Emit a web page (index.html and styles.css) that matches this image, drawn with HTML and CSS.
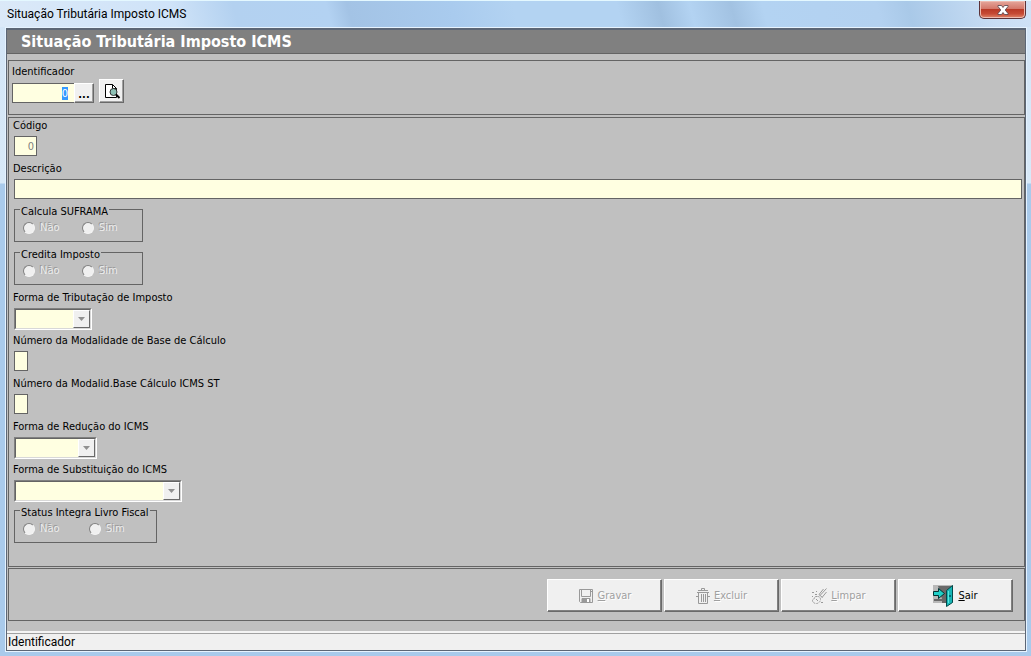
FILE: index.html
```
<!DOCTYPE html>
<html lang="pt-BR">
<head>
	<meta charset="utf-8">
	<title>Situação Tributária Imposto ICMS</title>
	<link rel="stylesheet" href="styles.css">
</head>
<body>
<div class="window">
	<div class="titlebar">
		<span class="caption">Situação Tributária Imposto ICMS</span>
		<button class="close" aria-label="Fechar">
			<svg width="12" height="10" viewBox="0 0 12 10"><path d="M1 .5h3.500L6 2.500 7.500.5H11v1L8.200 5 11 8.500v1H7.500L6 7.500 4.500 9.500H1v-1L3.800 5 1 1.500z" fill="#fff" stroke="#50404a" stroke-width=".8"/></svg>
		</button>
	</div>

	<div class="client">
		<h1>Situação Tributária Imposto ICMS</h1>

		<div class="panel key">
			<label for="identificador">Identificador</label>
			<div class="key-row">
				<div class="lookup">
					<input id="identificador" type="text" value="0">
					<button class="dots" aria-label="Procurar">...</button>
				</div>
				<button class="preview" aria-label="Visualizar">
					<svg width="18" height="18" viewBox="0 0 18 18">
						<path d="M2.500 2.500h7l4 4v9h-11z" fill="#fff" stroke="#000"/>
						<path d="M9.500 2.500v4h4" fill="none" stroke="#000"/>
						<circle cx="10.500" cy="10" r="3.500" fill="#8cc0b4" stroke="#333"/>
						<path d="M13 12.500l3.500 3.500" stroke="#000" stroke-width="2"/>
					</svg>
				</button>
			</div>
		</div>

		<div class="panel fields">
			<div class="field">
				<label for="codigo">Código</label>
				<input id="codigo" class="code" type="text" value="0" disabled>
			</div>
			<div class="field">
				<label for="descricao">Descrição</label>
				<input id="descricao" class="wide" type="text">
			</div>
			<fieldset>
				<legend>Calcula SUFRAMA</legend>
				<label><input type="radio" name="suframa" disabled>Não</label>
				<label><input type="radio" name="suframa" disabled>Sim</label>
			</fieldset>
			<fieldset>
				<legend>Credita Imposto</legend>
				<label><input type="radio" name="credita" disabled>Não</label>
				<label><input type="radio" name="credita" disabled>Sim</label>
			</fieldset>
			<div class="field">
				<label for="tributacao">Forma de Tributação de Imposto</label>
				<div class="combo combo-s">
					<select id="tributacao" disabled></select>
					<span class="arrow"><svg width="7" height="4" viewBox="0 0 7 4"><path d="M0 0h7L3.500 4z"/></svg></span>
				</div>
			</div>
			<div class="field">
				<label for="modbase">Número da Modalidade de Base de Cálculo</label>
				<input id="modbase" class="tiny" type="text">
			</div>
			<div class="field">
				<label for="modst">Número da Modalid.Base Cálculo ICMS ST</label>
				<input id="modst" class="tiny" type="text">
			</div>
			<div class="field">
				<label for="reducao">Forma de Redução do ICMS</label>
				<div class="combo combo-m">
					<select id="reducao" disabled></select>
					<span class="arrow"><svg width="7" height="4" viewBox="0 0 7 4"><path d="M0 0h7L3.500 4z"/></svg></span>
				</div>
			</div>
			<div class="field">
				<label for="substituicao">Forma de Substituição do ICMS</label>
				<div class="combo combo-l">
					<select id="substituicao" disabled></select>
					<span class="arrow"><svg width="7" height="4" viewBox="0 0 7 4"><path d="M0 0h7L3.500 4z"/></svg></span>
				</div>
			</div>
			<fieldset class="status-group">
				<legend>Status Integra Livro Fiscal</legend>
				<label><input type="radio" name="livro" disabled>Não</label>
				<label><input type="radio" name="livro" disabled>Sim</label>
			</fieldset>
		</div>

		<div class="panel actions">
			<button disabled>
				<svg width="16" height="16" viewBox="0 0 16 16" fill="none" stroke="#999">
					<path d="M1.500 1.500h13v13h-12l-1-1zM3.500 1.500v7h9v-7M12.500 3.500h2"/>
					<path d="M4 10.500h8v4H4z" fill="#999"/><path d="M10 11v3" stroke="#fff" stroke-width="2"/>
				</svg>
				<span><u>G</u>ravar</span>
			</button>
			<button disabled>
				<svg width="14" height="16" viewBox="0 0 14 16" fill="none" stroke="#999">
					<path d="M5.500 2V.5h3V2M2 2.500h10M1 4.500h12M0 8.500h2M12 8.500h2M2.500 5v10.500h9V5M5.500 6v8M7.500 6v8M9.500 6v8"/>
				</svg>
				<span><u>E</u>xcluir</span>
			</button>
			<button disabled>
				<svg width="16" height="16" viewBox="0 0 16 16" fill="none" stroke="#999">
					<path d="M15.500.5L9 7.500M15.500 4L11 9.500M12.500 1L8 6.500"/>
					<path d="M8 6.500l3.500 3"/>
					<path d="M6.500 8.500c2 0 3 1 3 3s-2 4-4 4-4-1-4-3 2-1 2-2.500 1-1.500 3-1.500z" stroke-dasharray="2 1"/>
					<path d="M1 4.500h2M4 6.500h2M1 8.500h1M5 3.500h1M10 14.500h2M5 11l2 2"/>
				</svg>
				<span><u>L</u>impar</span>
			</button>
			<button>
				<svg width="21" height="22" viewBox="0 0 21 22">
					<path d="M0 0h20v18H0z" fill="#b8b8b8"/>
					<path d="M5 1h13v17H9v-2H1v-2h8z" fill="#686868"/>
					<path d="M.5 6.500h5v-3l6 5-6 5v-3h-5z" fill="#20d0c8" stroke="#033"/>
					<path d="M13.500 5.500l6-5v17l-6 4z" fill="#16b5b5" stroke="#034848"/>
					<path d="M15.500 6v12" stroke="#55e8e0"/><path d="M17 10v2" stroke="#023"/>
				</svg>
				<span><u>S</u>air</span>
			</button>
		</div>

		<div class="statusbar">Identificador</div>
	</div>
</div>
<script>
	// start with the key field selected
	document.getElementById("identificador").select();
</script>
</body>
</html>
```
FILE: styles.css
```
* { box-sizing: border-box; }
body { margin: 0; font: 11px/14px "DejaVu Sans Condensed", "DejaVu Sans", sans-serif; color: #000; }
input, select, button { font: inherit; margin: 0; border-radius: 0; }
button { padding: 0; background: #f0f0f0; color: #000; }

.window {
	display: flex;
	flex-direction: column;
	min-height: 100vh;
	padding: 0 4px 4px 5px;
	border-top: 1px solid #e4f8ff;
	background: linear-gradient(#d3e5f7 0, #d8e9f8 182px, #a9caeb 183px, #a9caeb 100%);
}

/* title bar */
.titlebar {
	display: flex;
	justify-content: space-between;
	align-items: flex-start;
	height: 26px;
	margin: 0 -4px 0 -5px;
	padding: 0 5px 0 7px;
	background: linear-gradient(75deg, #dbe9f8 0, #cfe3f8 17%, #b3d1f0 23%, #b3d2f2 32%, #a3c3e5 34%, #a9cbee 44%, #b3d3f2 50%, #b3d3f2 60%, #a0c0e0 64%, #b3d3f2 67%, #a2c2e2 71%, #b3d3f2 74%, #b3d1f0 85%, #a9c9e8 88%, #c8ddf4 96%, #d0e2f6 100%);
}
.caption { font: 12px/26px Roboto, sans-serif; }
.close {
	width: 47px;
	height: 18px;
	border: 1px solid #5c3238;
	border-top: 0;
	border-radius: 0 0 5px 5px;
	background: linear-gradient(#e5a79c 0, #d4786b 45%, #b93a27 50%, #c64a35 75%, #e0866b 100%);
	box-shadow: inset 0 0 0 1px #eebbb0;
	line-height: 0;
}

.client {
	flex: 1;
	display: flex;
	flex-direction: column;
	border: 1px solid #e6f3ff;
	background: #c0c0c0;
	box-shadow: inset 1px 2px 0 #5c6675, inset -1px -1px 0 #5c6675;
	padding: 2px 1px 1px 1px;
}
h1 {
	margin: 0 0 6px;
	padding-left: 14px;
	border-bottom: 1px solid #646464;
	background: #808080;
	color: #fff;
	font: bold 16px/23px "DejaVu Sans Condensed", "DejaVu Sans", sans-serif;
}

.panel { border: 1px solid #646464; margin-left: 1px; }
label { display: block; }
input[type="text"] {
	display: block;
	height: 20px;
	padding: 0 2px;
	border: 1px solid #646464;
	background: #ffffe1;
	outline: 0;
}

.key { height: 55px; margin-bottom: 2px; padding: 4px 3px; }
.key-row { display: flex; gap: 5px; }
.lookup { display: flex; padding-top: 4px; }
.lookup input { width: 62px; padding-right: 6px; border-right: 0; text-align: right; }
#identificador::selection { background: #3399ff; color: #fff; }
.dots, .preview, .actions button {
	border: 1px solid;
	border-color: #fff #696969 #696969 #fff;
	box-shadow: inset -1px -1px 0 #a0a0a0;
}
.dots { width: 20px; height: 20px; padding-top: 3px; font-weight: bold; }
.preview { display: grid; place-items: center; width: 25px; height: 24px; }

.fields {
	flex: 1;
	display: flex;
	flex-direction: column;
	margin-bottom: 1px;
	padding: 1px 2px 0 5px;
}
.field { height: 43px; }
.field label { margin: 0 0 3px -1px; }
.code { width: 23px; text-align: right; color: #808080; }
.wide { width: 100%; }
.tiny { width: 14px; }

fieldset {
	display: flex;
	width: 129px;
	min-width: 0;
	margin: 0 0 6px;
	padding: 7px 0 6px 8px;
	border: 1px solid #646464;
}
legend {
	height: 9px;
	margin-left: -3px;
	padding: 0 1px;
	line-height: 13px;
}
fieldset label {
	display: flex;
	align-items: center;
	gap: 5px;
	width: 59px;
	color: #ececec;
	text-shadow: -1px -1px 0 #999;
}
fieldset input {
	appearance: none;
	width: 12px;
	height: 12px;
	border: 1px solid;
	border-color: #808080 #f4f4f4 #f4f4f4 #808080;
	border-radius: 50%;
	background: #f0f0f0;
}
.status-group { width: 143px; }
.status-group label { width: 66px; }

.combo {
	position: relative;
	height: 22px;
	border: 1px solid;
	border-color: #808080 #fff #fff #808080;
}
.combo select {
	display: block;
	appearance: none;
	width: 100%;
	height: 20px;
	border: 1px solid;
	border-color: #646464 #d8d8d8 #d8d8d8 #646464;
	background: #ffffe1;
	opacity: 1;
}
.combo .arrow {
	position: absolute;
	top: 1px;
	right: 1px;
	bottom: 1px;
	display: grid;
	place-items: center;
	width: 17px;
	border: 1px solid;
	border-color: #fff #696969 #696969 #fff;
	background: #f0f0f0;
	pointer-events: none;
}
.arrow path { fill: #909090; }
.combo-s { width: 78px; }
.combo-m { width: 83px; }
.combo-l { width: 168px; }

/* bottom buttons */
.actions {
	display: flex;
	justify-content: flex-end;
	gap: 2px;
	padding: 10px 11px 8px;
	margin-bottom: 10px;
}
.actions button {
	display: flex;
	justify-content: center;
	align-items: center;
	gap: 4px;
	width: 115px;
	height: 33px;
	box-shadow: inset -1px -1px 0 #808080;
}
.actions button:disabled { color: #a0a0a0; text-shadow: 1px 1px 0 #fff; }

.statusbar {
	height: 19px;
	padding-left: 1px;
	border-top: 2px solid #f4f4f4;
	background: #f0f0f0;
	box-shadow: inset 0 1px 0 #a0a0a0;
	font: 12px/18px Roboto, sans-serif;
}
```
